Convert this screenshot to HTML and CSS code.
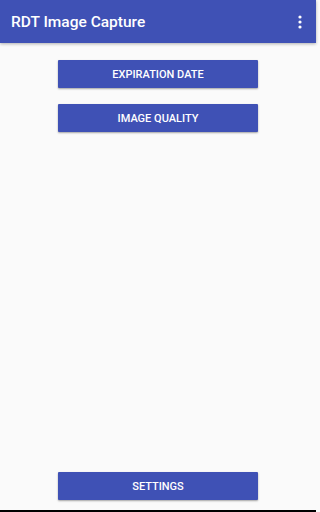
FILE: index.html
```html
<!DOCTYPE html>
<html>
<head>
<meta charset="utf-8">
<link rel="stylesheet" href="styles.css">
</head>
<body>
<div class="app">
  <header class="toolbar">
    <span class="title">RDT Image Capture</span>
    <span class="menu" aria-label="More options">
      <svg width="4" height="14" viewBox="0 0 4 14"><circle cx="2" cy="2" r="1.6" fill="#fff"/><circle cx="2" cy="7" r="1.6" fill="#fff"/><circle cx="2" cy="12" r="1.6" fill="#fff"/></svg>
    </span>
  </header>
  <main class="content">
    <button class="btn">EXPIRATION DATE</button>
    <button class="btn">IMAGE QUALITY</button>
    <div class="spacer"></div>
    <button class="btn">SETTINGS</button>
  </main>
  <div class="navbar"></div>
</div>
</body>
</html>
```
FILE: styles.css
```css
html, body {
  margin: 0;
  padding: 0;
  height: 100%;
  background: #fafafa;
  font-family: Roboto, "Liberation Sans", sans-serif;
}
.app {
  display: flex;
  flex-direction: column;
  width: 316px;
  height: 512px;
}
.toolbar {
  height: 43px;
  background: #3f51b5;
  display: flex;
  align-items: center;
  justify-content: space-between;
  padding: 0 14px 0 11px;
  box-shadow: 0 1px 3px rgba(0,0,0,0.3);
  position: relative;
  z-index: 1;
  flex: none;
}
.title {
  color: #fff;
  font-size: 15.5px;
  font-weight: 500;
}
.menu {
  display: flex;
  margin-top: 1px;
}
.content {
  flex: 1;
  display: flex;
  flex-direction: column;
  align-items: center;
  padding: 17px 0 10px;
  gap: 16px;
}
.spacer {
  flex: 1;
}
.btn {
  width: 200px;
  height: 28px;
  flex: none;
  border: none;
  border-radius: 1px;
  background: #3f51b5;
  color: #fff;
  font-family: Roboto, "Liberation Sans", sans-serif;
  font-size: 11px;
  font-weight: 500;
  box-shadow: 0 1px 2px rgba(0,0,0,0.35);
  padding: 0;
}
.spacer + .btn {
  margin-top: -16px;
}
.navbar {
  height: 2px;
  background: #000;
  flex: none;
}
```
